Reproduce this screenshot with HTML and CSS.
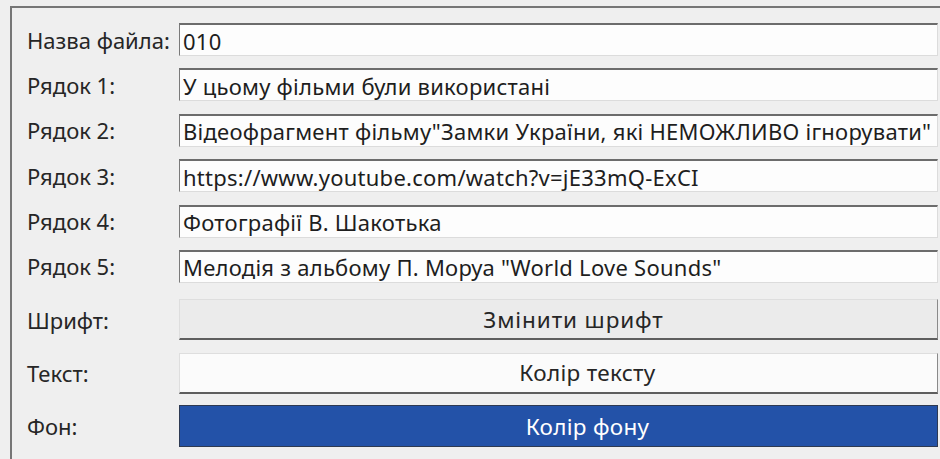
FILE: index.html
```html
<!DOCTYPE html>
<html>

<head>
    <meta charset="utf-8">
    <title>Налаштування титрів</title>
    <link rel="stylesheet" href="styles.css">
</head>

<body>
    <div class="frame">
        <form class="titles" name="titles">
            <label class="row">
                <span class="caption">Назва файла:</span>
                <input class="field" type="text" name="file" value="010">
            </label>
            <label class="row">
                <span class="caption">Рядок 1:</span>
                <input class="field" type="text" name="line1" value="У цьому фільми були використані">
            </label>
            <label class="row">
                <span class="caption">Рядок 2:</span>
                <input class="field" type="text" name="line2" value="Відеофрагмент фільму&quot;Замки України, які НЕМОЖЛИВО ігнорувати&quot;">
            </label>
            <label class="row">
                <span class="caption">Рядок 3:</span>
                <input class="field" type="text" name="line3" value="https://www.youtube.com/watch?v=jE33mQ-ExCI">
            </label>
            <label class="row">
                <span class="caption">Рядок 4:</span>
                <input class="field" type="text" name="line4" value="Фотографії В. Шакотька">
            </label>
            <label class="row">
                <span class="caption">Рядок 5:</span>
                <input class="field" type="text" name="line5" value="Мелодія з альбому П. Моруа &quot;World Love Sounds&quot;">
            </label>

            <div class="row row-btn first-btn">
                <span class="caption">Шрифт:</span>
                <button class="btn btn-font" type="button">Змінити шрифт</button>
            </div>
            <div class="row row-btn">
                <span class="caption">Текст:</span>
                <button class="btn btn-text" type="button">Колір тексту</button>
            </div>
            <div class="row row-btn last-btn">
                <span class="caption">Фон:</span>
                <button class="btn btn-bg" type="button">Колір фону</button>
            </div>
        </form>
    </div>
</body>

</html>
```

FILE: styles.css
```css
body {
margin: 0;
background-color: #efefef;
font-family: "Noto Sans", "Open Sans", sans-serif;
color: #262626;
overflow: hidden;
}

.frame {
margin: 6px 0 0 10px;
border-top: 2px solid #767676;
border-left: 2px solid #767676;
height: 453px;
box-sizing: border-box;
padding: 15px 0 0 15px;
overflow: hidden;
}

.titles {
display: flex;
flex-direction: column;
gap: 12.4px;
width: 911px;
}

.row {
display: flex;
align-items: center;
}

.caption {
width: 152px;
flex: none;
font-size: 22px;
white-space: nowrap;
}

.field {
flex: 1;
min-width: 0;
height: 33px;
box-sizing: border-box;
margin: 0;
padding: 1px 0 0 3px;
font-family: inherit;
font-size: 22px;
letter-spacing: 0.25px;
color: #1e1e1e;
background: #fdfdfd;
border-top: 2px solid #6c6c6c;
border-left: 1px solid #7a7a7a;
border-right: 1px solid #dcdcdc;
border-bottom: 1px solid #dcdcdc;
border-radius: 0;
outline: none;
}

.row-btn.first-btn {
margin-top: 4px;
}

.row-btn.last-btn {
margin-top: -1px;
}

.btn {
flex: 1;
height: 41px;
box-sizing: border-box;
margin: 0;
padding: 0 0 0 58px;
font-family: inherit;
font-size: 22.5px;
letter-spacing: 0.3px;
color: #262626;
border-top: 1px solid #dedede;
border-left: 1px solid #dedede;
border-right: 1px solid #8a8a8a;
border-bottom: 2px solid #5e5e5e;
border-radius: 0;
cursor: pointer;
}

.btn-font {
padding-left: 30px;
letter-spacing: 0.9px;
background-color: #ebebeb;
}

.btn-text {
background-color: #fbfbfb;
}

.btn-bg {
height: 42px;
background-color: #2352a8;
color: #fff;
border: 1px solid #2e3a52;
}
```
